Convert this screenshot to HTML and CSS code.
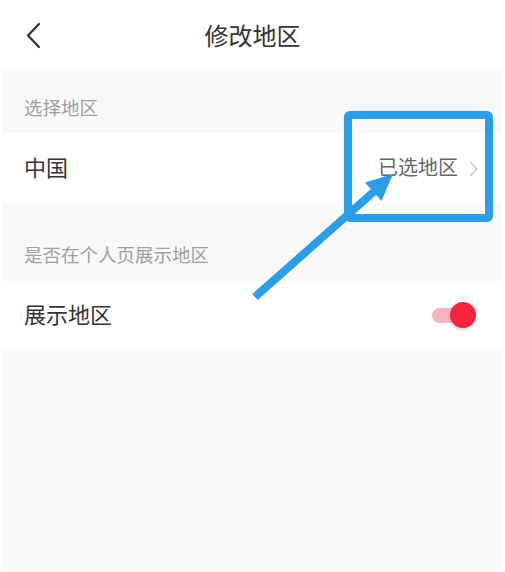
FILE: index.html
```html
<!DOCTYPE html>
<html lang="zh-CN">
<head>
<meta charset="utf-8">
<title>修改地区</title>
<link rel="stylesheet" href="styles.css">
</head>
<body>
<header class="header">
  <div class="back">
    <svg width="16" height="28" viewBox="0 0 16 28"><polyline points="13,2 2,13.5 13,25" fill="none" stroke="#333" stroke-width="2.2" stroke-linecap="round" stroke-linejoin="round"/></svg>
  </div>
  <div class="title">修改地区</div>
  <div></div>
</header>
<main class="content">
  <div class="label label-first">选择地区</div>
  <div class="row">
    <span class="row-text">中国</span>
    <span class="row-right">
      <span class="row-value">已选地区</span>
      <svg class="chev" width="10" height="16" viewBox="0 0 10 16"><polyline points="1.5,1.5 8,8 1.5,14.5" fill="none" stroke="#c4c4c4" stroke-width="1.4" stroke-linecap="round" stroke-linejoin="round"/></svg>
    </span>
  </div>
  <div class="label label-second">是否在个人页展示地区</div>
  <div class="row">
    <span class="row-text">展示地区</span>
    <span class="toggle"><span class="track"></span><span class="knob"></span></span>
  </div>
</main>
<svg class="annotation" width="505" height="572" viewBox="0 0 505 572">
  <rect x="348" y="115" width="141" height="103" rx="2" fill="none" stroke="#2a9ee6" stroke-width="8" stroke-linejoin="round"/>
  <line x1="255" y1="297" x2="378" y2="188" stroke="#2a9ee6" stroke-width="8"/>
  <polygon points="393,174 365,182.5 381.5,201" fill="#2a9ee6"/>
</svg>
</body>
</html>
```

FILE: styles.css
```css
html, body {
  margin: 0;
  padding: 0;
}
body {
  background: #ffffff;
  font-family: "Noto Sans CJK SC", "Noto Sans", "Liberation Sans", sans-serif;
  width: 505px;
  height: 572px;
  overflow: hidden;
  position: relative;
}
.header {
  height: 70px;
  display: grid;
  grid-template-columns: 1fr auto 1fr;
  align-items: center;
  background: #fff;
}
.back {
  padding-left: 26px;
  padding-top: 2px;
  display: flex;
  align-items: center;
}
.title {
  font-size: 24px;
  color: #333;
  line-height: 30px;
}
.content {
  margin: 0 3px 0 2px;
  background: #f9f9f9;
  height: 502px;
}
.label {
  box-sizing: border-box;
  font-size: 18.5px;
  line-height: 24px;
  color: #a0a0a0;
  padding-left: 22px;
}
.label-first {
  height: 64px;
  padding-top: 25px;
}
.label-second {
  height: 78px;
  padding-top: 39px;
}
.row {
  height: 69px;
  background: #fff;
  display: flex;
  align-items: center;
  justify-content: space-between;
  padding: 0 23px 0 22px;
}
.row-text {
  font-size: 22px;
  color: #333;
  line-height: 30px;
  margin-bottom: 5px;
}
.row-right {
  display: flex;
  align-items: center;
  gap: 11px;
}
.row-value {
  font-size: 20px;
  color: #666;
  line-height: 28px;
  margin-bottom: 3px;
}
.chev {
  display: block;
}
.toggle {
  position: relative;
  width: 46px;
  height: 28px;
  margin-right: 2px;
  margin-bottom: 2px;
}
.track {
  position: absolute;
  left: 1px;
  top: 7px;
  width: 36px;
  height: 15px;
  border-radius: 8px;
  background: #f9b5bf;
}
.knob {
  position: absolute;
  right: 1px;
  top: 1px;
  width: 26px;
  height: 26px;
  border-radius: 50%;
  background: #f5243d;
  box-shadow: 0 2px 3px rgba(0, 0, 0, 0.18);
}
.annotation {
  position: absolute;
  left: 0;
  top: 0;
  pointer-events: none;
}
```
